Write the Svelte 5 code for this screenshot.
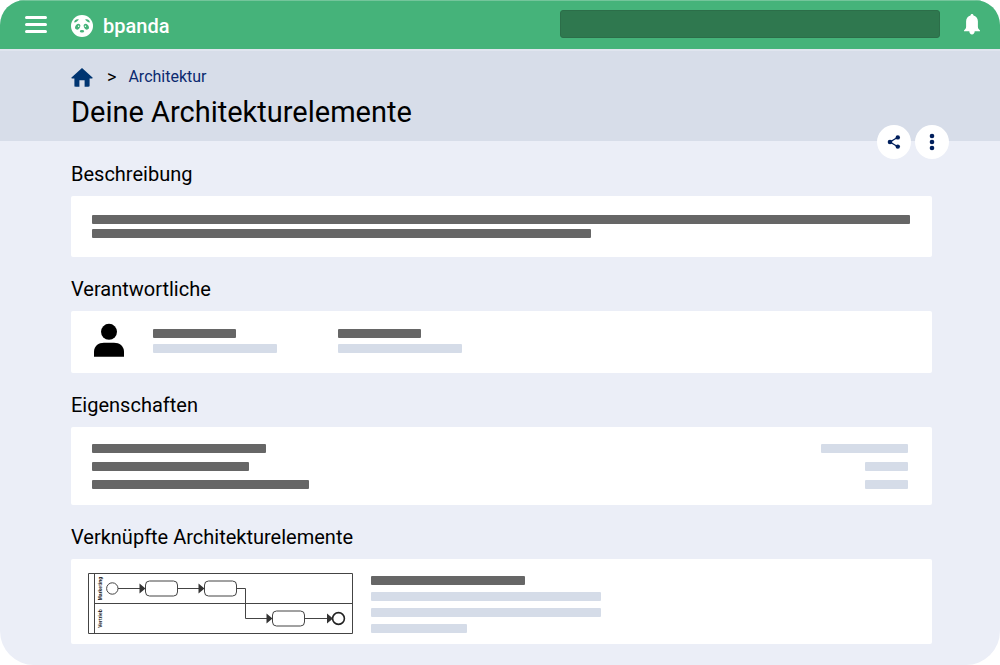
<script>
  const contacts = [
    { name: 83, role: 124 },
    { name: 83, role: 124 }
  ];
  const properties = [
    { label: 174, value: 87 },
    { label: 157, value: 43 },
    { label: 217, value: 43 }
  ];
  const linkedLines = [230, 230, 96];
</script>

<div class="app">
  <header class="topbar">
    <button class="icon-button menu" aria-label="Menü">
      <svg width="22" height="17" viewBox="0 0 22 17" fill="none" stroke="#fff" stroke-width="3" stroke-linecap="round">
        <path d="M1.5 1.5h19M1.5 8.5h19M1.5 15.5h19" />
      </svg>
    </button>
    <a class="brand" href="#start">
      <svg width="22" height="22" viewBox="0 0 22 22">
        <circle cx="11" cy="11" r="11" fill="#fff" />
        <g fill="#45b37a">
          <path d="M3.200 7.400C3 5.200 5.200 3.600 7.900 4.400C6.800 6 5.200 7.200 3.200 7.400Z" />
          <path d="M18.800 7.400C19 5.200 16.800 3.600 14.100 4.400C15.200 6 16.800 7.200 18.800 7.400Z" />
          <ellipse cx="6.700" cy="11.700" rx="2.300" ry="3.100" transform="rotate(32 6.700 11.700)" />
          <ellipse cx="15.300" cy="11.700" rx="2.300" ry="3.100" transform="rotate(-32 15.300 11.700)" />
          <ellipse cx="11" cy="16.300" rx="2.200" ry="1.300" />
        </g>
        <circle cx="7.600" cy="11.200" r=".7" fill="#fff" />
        <circle cx="14.400" cy="11.200" r=".7" fill="#fff" />
      </svg>
      <span>bpanda</span>
    </a>
    <input class="search" type="search" aria-label="Suche" />
    <button class="icon-button" aria-label="Benachrichtigungen">
      <svg width="16" height="21" viewBox="0 0 16 21" fill="#fff">
        <path d="M8 0C8.900 0 9.500.7 9.500 1.600C12 2.300 13.900 4.500 13.900 7.300V12.800C13.900 14.300 14.600 15.300 16 16.600V17.200H0V16.600C1.400 15.300 2.100 14.300 2.100 12.800V7.300C2.100 4.500 4 2.300 6.500 1.600C6.500.7 7.100 0 8 0ZM5.300 17.200H10.700C10.700 19.100 9.500 20.500 8 20.500S5.300 19.100 5.300 17.200Z" />
      </svg>
    </button>
  </header>

  <div class="page-head">
    <nav class="breadcrumb" aria-label="Brotkrumen">
      <a href="#home" aria-label="Startseite">
        <svg width="22" height="19" viewBox="0 0 22 19" fill="#003571">
          <path d="M11 0L21.500 9.500C21.900 10 21.700 10.400 21 10.400H18.600V17.600C18.600 18.400 18.200 18.800 17.400 18.800H13.600V12.300H8.400V18.800H4.600C3.800 18.800 3.400 18.400 3.400 17.600V10.400H1C.3 10.400.1 10 .5 9.500Z" />
        </svg>
      </a>
      <span class="divider">&gt;</span>
      <a class="crumb" href="#architektur">Architektur</a>
    </nav>
    <h1>Deine Architekturelemente</h1>
    <div class="actions">
      <button aria-label="Teilen">
        <svg width="14" height="14" viewBox="0 0 14 14" fill="#001f5c">
          <path d="M10.800 2.300L3 7L10.800 11.700" fill="none" stroke="#001f5c" stroke-width="1.300" />
          <circle cx="3" cy="7" r="2.300" /><circle cx="10.800" cy="2.400" r="2.200" /><circle cx="10.800" cy="11.600" r="2.200" />
        </svg>
      </button>
      <button aria-label="Weitere Aktionen">
        <svg width="6" height="18" viewBox="0 0 6 18" fill="#001f5c">
          <circle cx="3" cy="3" r="2.300" /><circle cx="3" cy="9" r="2.300" /><circle cx="3" cy="15" r="2.300" />
        </svg>
      </button>
    </div>
  </div>

  <main>
    <section>
      <h2>Beschreibung</h2>
      <div class="card description">
        <div class="bar"></div>
        <div class="bar short"></div>
      </div>
    </section>

    <section>
      <h2>Verantwortliche</h2>
      <div class="card people">
        <svg width="32" height="34" viewBox="0 0 32 34">
          <circle cx="16" cy="8.800" r="8" />
          <path d="M1 33.800V29C1 23 5.500 19.800 11 19.800H21C26.500 19.800 31 23 31 29V33.800Z" />
        </svg>
        {#each contacts as contact}
          <div class="person">
            <div class="bar" style:width="{contact.name}px"></div>
            <div class="bar light" style:width="{contact.role}px"></div>
          </div>
        {/each}
      </div>
    </section>

    <section>
      <h2>Eigenschaften</h2>
      <div class="card properties">
        {#each properties as property}
          <div class="property">
            <div class="bar" style:width="{property.label}px"></div>
            <div class="bar light" style:width="{property.value}px"></div>
          </div>
        {/each}
      </div>
    </section>

    <section>
      <h2>Verknüpfte Architekturelemente</h2>
      <div class="card linked">
        <svg class="diagram" width="265" height="61" viewBox="0 0 265 61" fill="none" stroke="#444" stroke-width="1">
          <path d="M.5.5H264.500V60.500H.5ZM6.500.5V60.500M6.500 30.500H264.500" />
          <path d="M30 15.500H52M90 15.500H111M149 15.500H157.500V45.500H180M217 45.500H240" />
          <rect x="57.500" y="8" width="32" height="15" rx="4" />
          <rect x="116.500" y="8" width="32" height="15" rx="4" />
          <rect x="184.500" y="38" width="32" height="15" rx="4" />
          <circle cx="24.300" cy="15.500" r="5.700" />
          <circle cx="250.500" cy="45.500" r="5.900" stroke="#222" stroke-width="1.600" />
          <path fill="#333" stroke="none" d="M51.500 10.500L57.500 15.500L51.500 20.500ZM110.500 10.500L116.500 15.500L110.500 20.500ZM178.500 40.500L184.500 45.500L178.500 50.500ZM239 40.500L245 45.500L239 50.500Z" />
          <text transform="translate(14 15.500) rotate(-90)">Marketing</text>
          <text transform="translate(14 45.500) rotate(-90)">Vertrieb</text>
        </svg>
        <div class="lines">
          <div class="bar" style:width="154px"></div>
          {#each linkedLines as width}
            <div class="bar light" style:width="{width}px"></div>
          {/each}
        </div>
      </div>
    </section>
  </main>
</div>

<style>
  :global(body) {
    margin: 0;
    background: #fff;
  }
  .app {
    box-sizing: border-box;
    min-height: 100vh;
    overflow: hidden;
    border-radius: 25px 25px 34px 34px;
    background: #ebeef7;
    color: #000;
    font-family: Roboto, sans-serif;
  }
  svg {
    display: block;
    flex: none;
  }
  button {
    padding: 0;
    border: 0;
    background: none;
    cursor: pointer;
  }
  .topbar {
    box-sizing: border-box;
    display: flex;
    align-items: center;
    height: 49px;
    padding: 0 20px 1px 25px;
    background: #45b37a;
    box-shadow: inset 0 1px #74c59b;
  }
  .brand {
    display: flex;
    align-items: center;
    gap: 10px;
    margin: 4px auto 0 24px;
    color: #fff;
    font-size: 20px;
    line-height: 24px;
    font-weight: 500;
    text-decoration: none;
  }
  .search {
    box-sizing: border-box;
    width: 38vw;
    height: 28px;
    margin-right: 24px;
    padding: 0 10px;
    border: 1px solid #2c6e49;
    border-radius: 3px;
    background: #2f784f;
    color: #fff;
    font: inherit;
    font-size: 16px;
  }
  .page-head {
    position: relative;
    box-sizing: border-box;
    height: 92px;
    padding: 15px 68px 0 71px;
    border-top: 2px solid #e0e5ef;
    background: #d7dde9;
  }
  .breadcrumb {
    display: flex;
    align-items: center;
    font-size: 16px;
    line-height: 22px;
  }
  .divider {
    margin: 0 12px 0 14px;
    font-size: 18px;
  }
  .crumb {
    color: #0b2a70;
    text-decoration: none;
  }
  h1 {
    margin: 6px 0 0;
    font-size: 29px;
    line-height: 36px;
    font-weight: 400;
  }
  .actions {
    position: absolute;
    right: 51px;
    bottom: -18px;
    display: flex;
    gap: 4px;
  }
  .actions button {
    display: grid;
    place-items: center;
    width: 34px;
    height: 34px;
    border-radius: 50%;
    background: #fff;
  }
  main {
    display: flex;
    flex-direction: column;
    gap: 20px;
    padding: 21px 68px 21px 71px;
  }
  h2 {
    margin: 0 0 10px;
    font-size: 20px;
    line-height: 24px;
    font-weight: 400;
  }
  .card {
    border-radius: 2px;
    background: #fff;
  }
  .bar {
    height: 9px;
    border-radius: 1px;
    background: #666;
  }
  .light {
    background: #d5dce8;
  }
  .description {
    display: grid;
    gap: 5px;
    padding: 19px 22px 19px 21px;
  }
  .short {
    width: 61%;
  }
  .people {
    display: flex;
    padding: 12px 22px 16px;
  }
  .person {
    display: grid;
    align-content: start;
    gap: 6px;
    width: 157px;
    padding: 6px 0 0 28px;
  }
  .properties {
    display: grid;
    gap: 9px;
    padding: 17px 24px 16px 21px;
  }
  .property {
    display: flex;
    justify-content: space-between;
  }
  .linked {
    display: flex;
    gap: 18px;
    padding: 14px 17px 10px;
  }
  .lines {
    display: grid;
    align-content: start;
    gap: 7px;
    padding-top: 3px;
  }
  .diagram text {
    fill: #222;
    stroke: none;
    font-family: "Liberation Sans", sans-serif;
    font-size: 5px;
    font-weight: 700;
    text-anchor: middle;
  }
</style>
